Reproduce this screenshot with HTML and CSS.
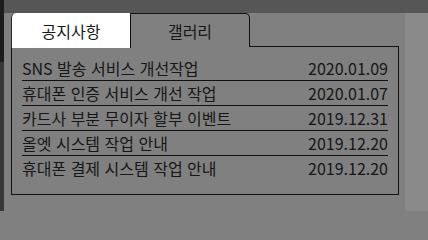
FILE: index.html
```html
<!DOCTYPE html>
<html lang="ko">
<head>
<meta charset="utf-8">
<link rel="stylesheet" href="styles.css">
</head>
<body>
<div class="screen">
  <div class="side-left"><div class="side-top"></div><div class="side-bottom"></div></div>
  <div class="main-col">
    <div class="topbar"></div>
    <div class="content-row">
      <div class="main">
        <div class="panel">
          <div class="tabs">
            <div class="tab tab-active">공지사항</div>
            <div class="tab tab-other">갤러리</div>
            <div class="tab-fill"></div>
          </div>
          <div class="box">
            <ul class="list">
              <li class="row"><span class="title">SNS 발송 서비스 개선작업</span><span class="date">2020.01.09</span></li>
              <li class="row"><span class="title">휴대폰 인증 서비스 개선 작업</span><span class="date">2020.01.07</span></li>
              <li class="row"><span class="title">카드사 부분 무이자 할부 이벤트</span><span class="date">2019.12.31</span></li>
              <li class="row"><span class="title">올엣 시스템 작업 안내</span><span class="date">2019.12.20</span></li>
              <li class="row"><span class="title">휴대폰 결제 시스템 작업 안내</span><span class="date">2019.12.20</span></li>
            </ul>
          </div>
        </div>
      </div>
      <div class="side-right"></div>
    </div>
  </div>
</div>
</body>
</html>
```

FILE: styles.css
```css
* { box-sizing: border-box; }
html, body { margin: 0; padding: 0; }
body {
  background: #808080;
  font-family: "Noto Sans CJK KR", "Noto Sans", sans-serif;
  color: #161616;
  width: 428px;
  height: 211px;
  overflow: hidden;
}
.screen { display: flex; width: 428px; height: 211px; }
.side-left { width: 4px; display: flex; flex-direction: column; }
.side-top { height: 62px; background: #1c1c1c; }
.side-bottom { flex: 1; background: #383838; }
.main-col { flex: 1; display: flex; flex-direction: column; }
.topbar { height: 13px; background: #565656; }
.content-row { flex: 1; display: flex; }
.main { flex: 1; }
.side-right { width: 23px; background: #8a8a8a; }
.panel { margin-left: 7px; width: 388px; }
.tabs { display: flex; align-items: flex-start; height: 34px; }
.tab {
  width: 120px;
  font-size: 16px;
  display: flex;
  align-items: center;
  justify-content: center;
}
.tab-active {
  background: #ffffff;
  height: 35px;
  margin-bottom: -1px;
  border-left: 1px solid #2a2a2a;
  border-right: 1px solid #111;
  border-top-left-radius: 5px;
  position: relative;
  z-index: 1;
}
.tab-other {
  width: 119px;
  height: 34px;
  border-top: 1px solid #111;
  border-right: 1px solid #111;
  border-top-right-radius: 5px;
  padding-top: 1px;
}
.tab-fill { flex: 1; height: 34px; border-bottom: 1px solid #111; }
.box {
  border: 1px solid #111;
  border-top: none;
  padding: 9px 10px 14px;
}
.list { list-style: none; margin: 0; padding: 0; }
.row {
  display: flex;
  justify-content: space-between;
  height: 25px;
  line-height: 24px;
  font-size: 16px;
  border-bottom: 1px solid #111;
}
.row:last-child { border-bottom: none; height: 24px; }
.date { letter-spacing: 0; }
```
